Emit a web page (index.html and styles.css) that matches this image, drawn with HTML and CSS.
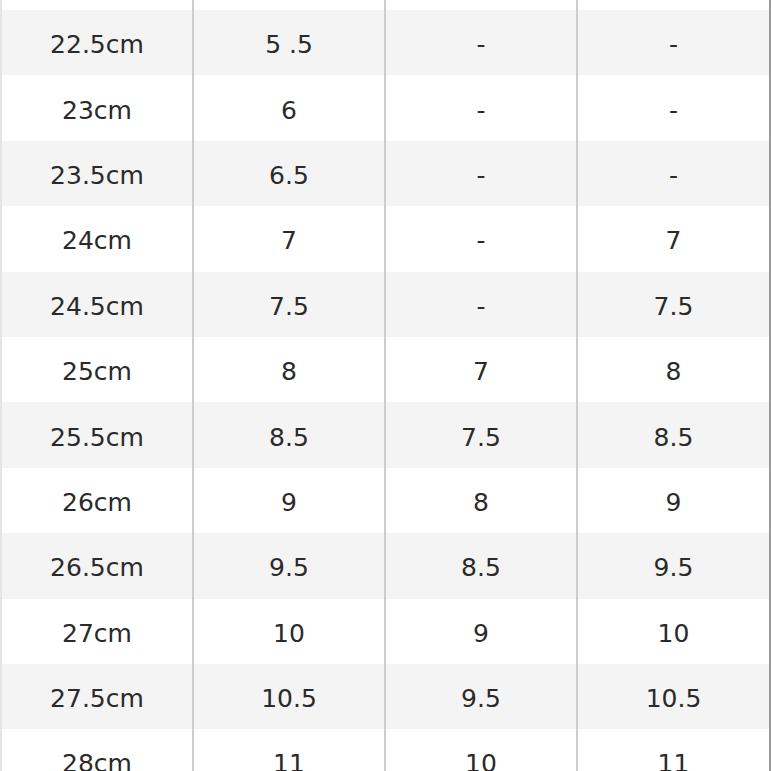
FILE: index.html
```html
<!DOCTYPE html>
<html>
<head>
<meta charset="utf-8">
<link rel="stylesheet" href="styles.css">
</head>
<body>
<div class="table">
  <div class="row top"><div class="cell"></div><div class="cell"></div><div class="cell"></div><div class="cell"></div></div>
  <div class="row alt"><div class="cell">22.5cm</div><div class="cell">5 .5</div><div class="cell">-</div><div class="cell">-</div></div>
  <div class="row"><div class="cell">23cm</div><div class="cell">6</div><div class="cell">-</div><div class="cell">-</div></div>
  <div class="row alt"><div class="cell">23.5cm</div><div class="cell">6.5</div><div class="cell">-</div><div class="cell">-</div></div>
  <div class="row"><div class="cell">24cm</div><div class="cell">7</div><div class="cell">-</div><div class="cell">7</div></div>
  <div class="row alt"><div class="cell">24.5cm</div><div class="cell">7.5</div><div class="cell">-</div><div class="cell">7.5</div></div>
  <div class="row"><div class="cell">25cm</div><div class="cell">8</div><div class="cell">7</div><div class="cell">8</div></div>
  <div class="row alt"><div class="cell">25.5cm</div><div class="cell">8.5</div><div class="cell">7.5</div><div class="cell">8.5</div></div>
  <div class="row"><div class="cell">26cm</div><div class="cell">9</div><div class="cell">8</div><div class="cell">9</div></div>
  <div class="row alt"><div class="cell">26.5cm</div><div class="cell">9.5</div><div class="cell">8.5</div><div class="cell">9.5</div></div>
  <div class="row"><div class="cell">27cm</div><div class="cell">10</div><div class="cell">9</div><div class="cell">10</div></div>
  <div class="row alt"><div class="cell">27.5cm</div><div class="cell">10.5</div><div class="cell">9.5</div><div class="cell">10.5</div></div>
  <div class="row"><div class="cell">28cm</div><div class="cell">11</div><div class="cell">10</div><div class="cell">11</div></div>
</div>
</body>
</html>
```
FILE: styles.css
```css
html, body {
  margin: 0;
  padding: 0;
  background: #ffffff;
  overflow: hidden;
}
.table {
  width: 771px;
  height: 771px;
  overflow: hidden;
  font-family: "DejaVu Sans", Verdana, sans-serif;
  font-size: 25px;
  color: #2a2a2a;
  border-right: 2px solid #9a9a9a;
  box-sizing: border-box;
}
.row {
  display: grid;
  grid-template-columns: 192px 192px 192px 1fr;
  height: 65.4px;
  background: #ffffff;
}
.row.top {
  height: 10px;
}
.row.alt {
  background: #f4f4f4;
}
.cell {
  display: flex;
  align-items: center;
  justify-content: center;
  border-left: 2px solid #cdcdcd;
  padding-top: 4px;
  box-sizing: border-box;
}
.cell:first-child {
  border-left: 2px solid #e4e4e4;
}
```
